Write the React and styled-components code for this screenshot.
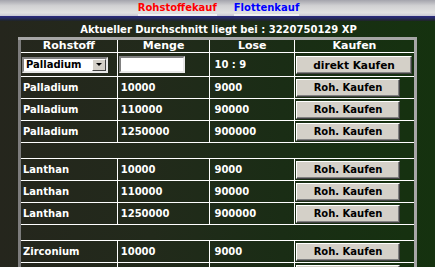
import styled, { createGlobalStyle } from 'styled-components';

const GlobalStyle = createGlobalStyle`
  html, body {
    margin: 0;
    padding: 0;
    overflow: hidden;
  }
  body {
    background: linear-gradient(to right, #25261d 0%, #222a1b 35%, #1a2d15 65%, #15320f 100%);
    font-family: 'DejaVu Sans', Verdana, sans-serif;
    font-weight: bold;
  }
`

const TopBar = styled.div`
  height: 16px;
  display: flex;
  justify-content: center;
  align-items: flex-start;
  gap: 17px;
  padding-left: 2px;
  background: linear-gradient(#a4a4ac 0%, #d0d0d2 35%, #e2e2e2 80%, #c8c8d4 100%);
`

const Band = styled.div`
  height: 5px;
  background: linear-gradient(#2a2a82 0%, #262a5a 50%, #1e2424 100%);
`

const TabLink = styled.span`
  font-size: 10px;
  line-height: 12px;
  padding-top: 2px;
  color: ${p => p.$color};
  border-bottom: 2px solid #f2f2f2;
`

const Title = styled.div`
  color: #fff;
  font-size: 10px;
  line-height: 12px;
  text-align: center;
  margin: 3px 0 1px;
  padding-left: 2px;
`

const Table = styled.table`
  margin: 0 auto;
  width: 399px;
  border-collapse: collapse;
  border: 3px solid #a6a6a6;
  border-left-color: #7c7c7c;
  table-layout: fixed;
  color: #fff;
  font-size: 10px;
`

const Th = styled.th`
  border: 1px solid #fff;
  font-size: 11px;
  height: 12px;
  line-height: 12px;
  padding: 0;
`

const Td = styled.td`
  border: 1px solid #fff;
  height: ${p => p.$h || 21}px;
  padding: 0 0 0 ${p => p.$pad ?? 2}px;
  vertical-align: middle;
  line-height: 12px;
`

const SelectBox = styled.div`
  width: 80px;
  height: 12px;
  display: flex;
  align-items: center;
  justify-content: space-between;
  background: #fff;
  border: 2px solid;
  border-color: #808080 #e8e8e8 #e8e8e8 #808080;
  color: #000;
  padding-left: 2px;
`

const Arrow = styled.div`
  width: 14px;
  height: 12px;
  box-sizing: border-box;
  background: #d4d0c8;
  border: 1px solid;
  border-color: #fff #404040 #404040 #fff;
  display: flex;
  align-items: center;
  justify-content: center;

  &::after {
    content: '';
    border-left: 3px solid transparent;
    border-right: 3px solid transparent;
    border-top: 3px solid #000;
  }
`

const TextInput = styled.div`
  width: 62px;
  height: 13px;
  background: #fff;
  border: 2px solid;
  border-color: #808080 #e8e8e8 #e8e8e8 #808080;
`

const Button = styled.div`
  width: ${p => p.$w}px;
  height: ${p => p.$h}px;
  box-sizing: border-box;
  display: flex;
  align-items: center;
  justify-content: center;
  background: #d4d0c8;
  color: #000;
  font-size: ${p => p.$fs || 10}px;
  border: 1px solid;
  border-color: #fff #404040 #404040 #fff;
  box-shadow: inset -1px -1px 0 #808080;
`

const groups = [
  ['Palladium', [['10000', '9000'], ['110000', '90000'], ['1250000', '900000']]],
  ['Lanthan', [['10000', '9000'], ['110000', '90000'], ['1250000', '900000']]],
  ['Zirconium', [['10000', '9000'], ['110000', '90000'], ['1250000', '900000']]],
]

export default function App() {
  return (
    <>
      <GlobalStyle />
      <TopBar>
        <TabLink $color="#ff0000">Rohstoffekauf</TabLink>
        <TabLink $color="#0000ff">Flottenkauf</TabLink>
      </TopBar>
      <Band />
      <Title>Aktueller Durchschnitt liegt bei : 3220750129 XP</Title>
      <Table>
        <colgroup>
          <col style={{ width: 97 }} />
          <col style={{ width: 92 }} />
          <col style={{ width: 84 }} />
          <col style={{ width: 120 }} />
        </colgroup>
        <thead>
          <tr>
            <Th>Rohstoff</Th>
            <Th>Menge</Th>
            <Th>Lose</Th>
            <Th>Kaufen</Th>
          </tr>
        </thead>
        <tbody>
          <tr>
            <Td $h={23} $pad={1}>
              <SelectBox>
                <span>Palladium</span>
                <Arrow />
              </SelectBox>
            </Td>
            <Td $h={23} $pad={1}><TextInput /></Td>
            <Td $h={23} $pad={4}>10 : 9</Td>
            <Td $h={23} $pad={1}>
              <Button $w={116} $h={18} $fs={10.6}>direkt Kaufen</Button>
            </Td>
          </tr>
          {groups.map(([name, rows], gi) => (
            <>
              {gi > 0 && (
                <tr key={name + '-gap'}>
                  <Td colSpan={4} $h={15} />
                </tr>
              )}
              {rows.map(([menge, lose]) => (
                <tr key={name + menge}>
                  <Td>{name}</Td>
                  <Td $pad={3}>{menge}</Td>
                  <Td $pad={4}>{lose}</Td>
                  <Td $pad={1}>
                    <Button $w={104} $h={18}>Roh. Kaufen</Button>
                  </Td>
                </tr>
              ))}
            </>
          ))}
        </tbody>
      </Table>
    </>
  );
}
